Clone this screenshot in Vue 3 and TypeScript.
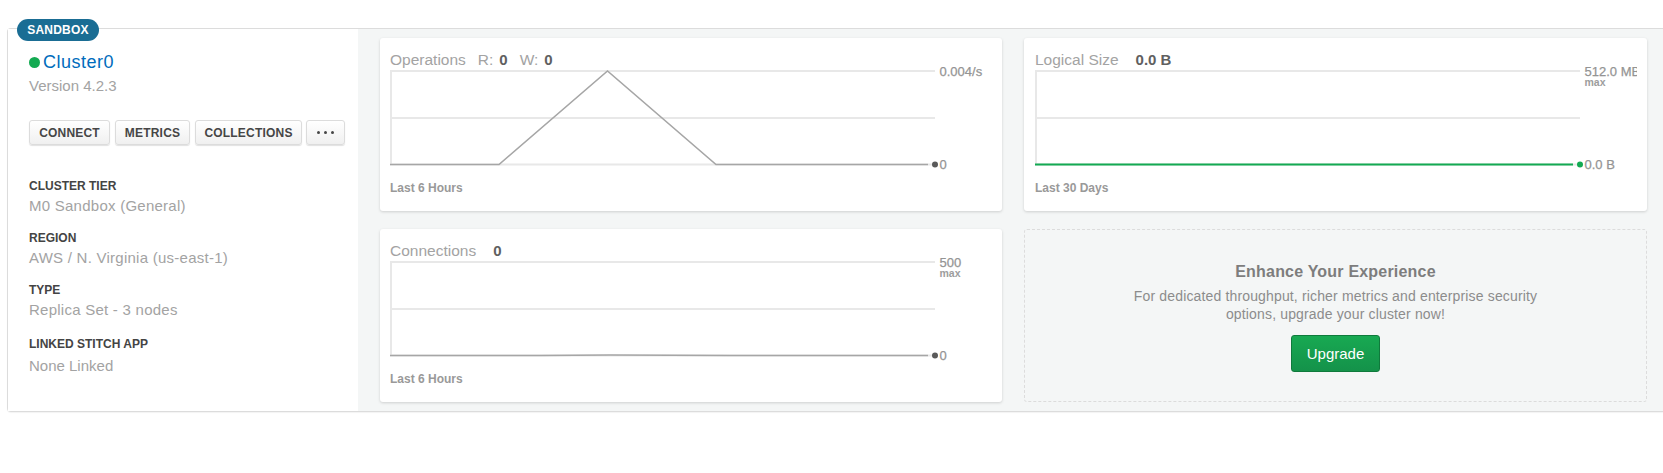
<script setup lang="ts">
interface Stat {
  label?: string
  value: string
}

interface Chart {
  title: string
  stats: Stat[]
  wideGap?: boolean
  top: string
  sub?: string
  bottom: string
  line: string
  green?: boolean
  footer: string
}

const details = [
  { label: 'CLUSTER TIER', value: 'M0 Sandbox (General)' },
  { label: 'REGION', value: 'AWS / N. Virginia (us-east-1)' },
  { label: 'TYPE', value: 'Replica Set - 3 nodes' },
  { label: 'LINKED STITCH APP', value: 'None Linked' },
]

const charts: Chart[] = [
  {
    title: 'Operations',
    stats: [
      { label: 'R:', value: '0' },
      { label: 'W:', value: '0' },
    ],
    top: '0.004/s',
    bottom: '0',
    line: '0,96.5 109,96.5 217.5,3 326,96.5 538,96.5',
    footer: 'Last 6 Hours',
  },
  {
    title: 'Logical Size',
    stats: [{ value: '0.0 B' }],
    wideGap: true,
    top: '512.0 MB',
    sub: 'max',
    bottom: '0.0 B',
    line: '0,96.5 538,96.5',
    green: true,
    footer: 'Last 30 Days',
  },
  {
    title: 'Connections',
    stats: [{ value: '0' }],
    wideGap: true,
    top: '500',
    sub: 'max',
    bottom: '0',
    line: '0,96.5 150,96.5 220,96 340,96.5 538,96.5',
    footer: 'Last 6 Hours',
  },
]
</script>

<template>
  <div class="page">
    <div class="cluster">
      <span class="badge">SANDBOX</span>

      <aside class="summary">
        <div class="name-row">
          <span class="status"></span>
          <a class="name">Cluster0</a>
        </div>
        <div class="version">Version 4.2.3</div>

        <div class="actions">
          <button class="action">CONNECT</button>
          <button class="action">METRICS</button>
          <button class="action">COLLECTIONS</button>
          <button class="action more" aria-label="More">
            <i></i><i></i><i></i>
          </button>
        </div>

        <dl class="details">
          <div v-for="item in details" :key="item.label" class="detail">
            <dt>{{ item.label }}</dt>
            <dd>{{ item.value }}</dd>
          </div>
        </dl>
      </aside>

      <section class="metrics">
        <div v-for="chart in charts" :key="chart.title" class="chart-card">
          <div class="chart-title" :class="{ wide: chart.wideGap }">
            <span class="chart-name">{{ chart.title }}</span>
            <span v-for="stat in chart.stats" :key="stat.value + stat.label" class="stat">
              <span v-if="stat.label">{{ stat.label }}</span>
              <b>{{ stat.value }}</b>
            </span>
          </div>

          <svg class="plot" width="602" height="102" viewBox="0 0 602 102">
            <g class="grid">
              <line x1="0" y1="3" x2="545" y2="3" />
              <line x1="1" y1="50" x2="545" y2="50" />
              <line x1="1" y1="3" x2="1" y2="96" />
              <line x1="0" y1="96.5" x2="545" y2="96.5" />
            </g>
            <polyline class="trace" :class="{ green: chart.green }" :points="chart.line" />
            <circle class="end" :class="{ green: chart.green }" cx="545" cy="96.5" r="3" />
            <text class="axis" x="549.5" y="7.5">{{ chart.top }}</text>
            <text v-if="chart.sub" class="axis-sub" x="549.5" y="18">{{ chart.sub }}</text>
            <text class="axis" x="549.5" y="101">{{ chart.bottom }}</text>
          </svg>

          <div class="chart-footer">{{ chart.footer }}</div>
        </div>

        <div class="upsell">
          <h3>Enhance Your Experience</h3>
          <p>For dedicated throughput, richer metrics and enterprise security options, upgrade your cluster now!</p>
          <button class="upgrade">Upgrade</button>
        </div>
      </section>
    </div>
  </div>
</template>

<style>
html,
body {
  margin: 0;
  background: #fff;
  overflow: hidden;
}
</style>

<style scoped>
.page {
  height: 473px;
  box-sizing: border-box;
  padding: 28px 0 0 7px;
  font-family: "Liberation Sans", Arial, sans-serif;
}

.cluster {
  position: relative;
  display: flex;
  border: 1px solid #dcdcdc;
  border-right: none;
  border-radius: 4px 0 0 4px;
  box-shadow: 0 1px 1px rgba(0, 0, 0, 0.05);
}

.badge {
  position: absolute;
  top: -10px;
  left: 9px;
  width: 82px;
  height: 22px;
  border-radius: 11px;
  background: #1a6d94;
  color: #fff;
  font-size: 12px;
  font-weight: 700;
  letter-spacing: 0.2px;
  line-height: 22px;
  text-align: center;
}

.summary {
  width: 350px;
  flex: none;
  box-sizing: border-box;
  padding: 21px 0 0 21px;
  background: #fff;
}

.name-row {
  display: flex;
  align-items: center;
  gap: 3px;
  height: 24px;
}

.status {
  width: 11px;
  height: 11px;
  margin-top: 1px;
  border-radius: 50%;
  background: #13aa52;
}

.name {
  color: #006cbc;
  font-size: 18px;
  letter-spacing: 0.5px;
}

.version {
  margin-top: 2px;
  color: #a3a3a3;
  font-size: 15px;
  line-height: 20px;
}

.actions {
  display: flex;
  gap: 5px;
  margin-top: 24px;
}

.action {
  height: 25px;
  padding: 0;
  border: 1px solid #dcdcdc;
  border-radius: 3px;
  background: linear-gradient(#fff, #f0f0f0);
  box-shadow: 0 1px 1px rgba(0, 0, 0, 0.12);
  color: #464646;
  font-family: inherit;
  font-size: 12px;
  font-weight: 700;
  letter-spacing: 0.2px;
  width: 81px;
}

.action:nth-child(2) {
  width: 75px;
}

.action:nth-child(3) {
  width: 107px;
}

.more {
  display: flex;
  align-items: center;
  justify-content: center;
  gap: 4px;
  width: 39px;
  margin-left: -1px;
}

.more i {
  width: 3px;
  height: 3px;
  border-radius: 50%;
  background: #464646;
}

.details {
  margin: 34px 0 0;
}

.detail {
  margin-bottom: 15px;
}

.detail:last-child {
  margin-top: 17px;
}

.detail dt {
  color: #444;
  font-size: 12px;
  font-weight: 700;
  line-height: 14px;
}

.detail dd {
  margin: 3px 0 0;
  color: #a3a3a3;
  font-size: 15px;
  letter-spacing: 0.25px;
  line-height: 20px;
}

.detail:last-child dd {
  margin-top: 5px;
  letter-spacing: 0;
}

.metrics {
  flex: 1;
  display: grid;
  grid-template-columns: 622px 623px;
  grid-template-rows: 173px 173px;
  gap: 18px 22px;
  padding: 9px 16px 9px 22px;
  background: #f4f6f6;
}

.chart-card {
  box-sizing: border-box;
  padding: 13px 0 0 10px;
  border-radius: 3px;
  background: #fff;
  box-shadow: 0 1px 3px rgba(0, 0, 0, 0.16);
}

.chart-card:nth-child(2) {
  padding-left: 11px;
}

.chart-title {
  display: flex;
  align-items: baseline;
  gap: 12px;
  height: 17px;
  color: #a3a3a3;
  font-size: 15.5px;
}

.chart-title.wide {
  gap: 17px;
}

.stat {
  display: flex;
  align-items: baseline;
  gap: 6px;
}

.stat b {
  color: #606060;
  font-size: 15px;
}

.plot {
  display: block;
  overflow: visible;
  clip-path: inset(-12px 0 -12px -2px);
}

.grid line {
  stroke: #e8e8e8;
  stroke-width: 2;
}

.trace {
  fill: none;
  stroke: #a6a6a6;
  stroke-width: 1.6;
}

.trace.green {
  stroke: #13aa52;
  stroke-width: 1.8;
}

.end {
  fill: #5a5a5a;
}

.end.green {
  fill: #13aa52;
}

.axis {
  fill: #949494;
  stroke: #949494;
  stroke-width: 0.25;
  font-size: 13px;
}

.axis-sub {
  fill: #9d9d9d;
  font-size: 10.5px;
  font-weight: 700;
}

.chart-footer {
  margin-top: 11px;
  color: #999;
  font-size: 12px;
  font-weight: 700;
  line-height: 14px;
}

.upsell {
  display: flex;
  flex-direction: column;
  align-items: center;
  box-sizing: border-box;
  padding-top: 32px;
  border: 1px dashed #dcdcdc;
  border-radius: 3px;
  text-align: center;
}

.upsell h3 {
  margin: 0;
  color: #7d7d7d;
  font-size: 16px;
  font-weight: 700;
  letter-spacing: 0.2px;
  line-height: 20px;
}

.upsell p {
  width: 430px;
  margin: 5px 0 0;
  color: #8c8c8c;
  font-size: 14px;
  letter-spacing: 0.15px;
  line-height: 18px;
}

.upgrade {
  width: 89px;
  height: 37px;
  margin-top: 12px;
  padding: 0;
  border: 1px solid #0f7a3c;
  border-radius: 3px;
  background: linear-gradient(#18a952, #14924a);
  color: #fff;
  font-family: inherit;
  font-size: 15px;
}
</style>
